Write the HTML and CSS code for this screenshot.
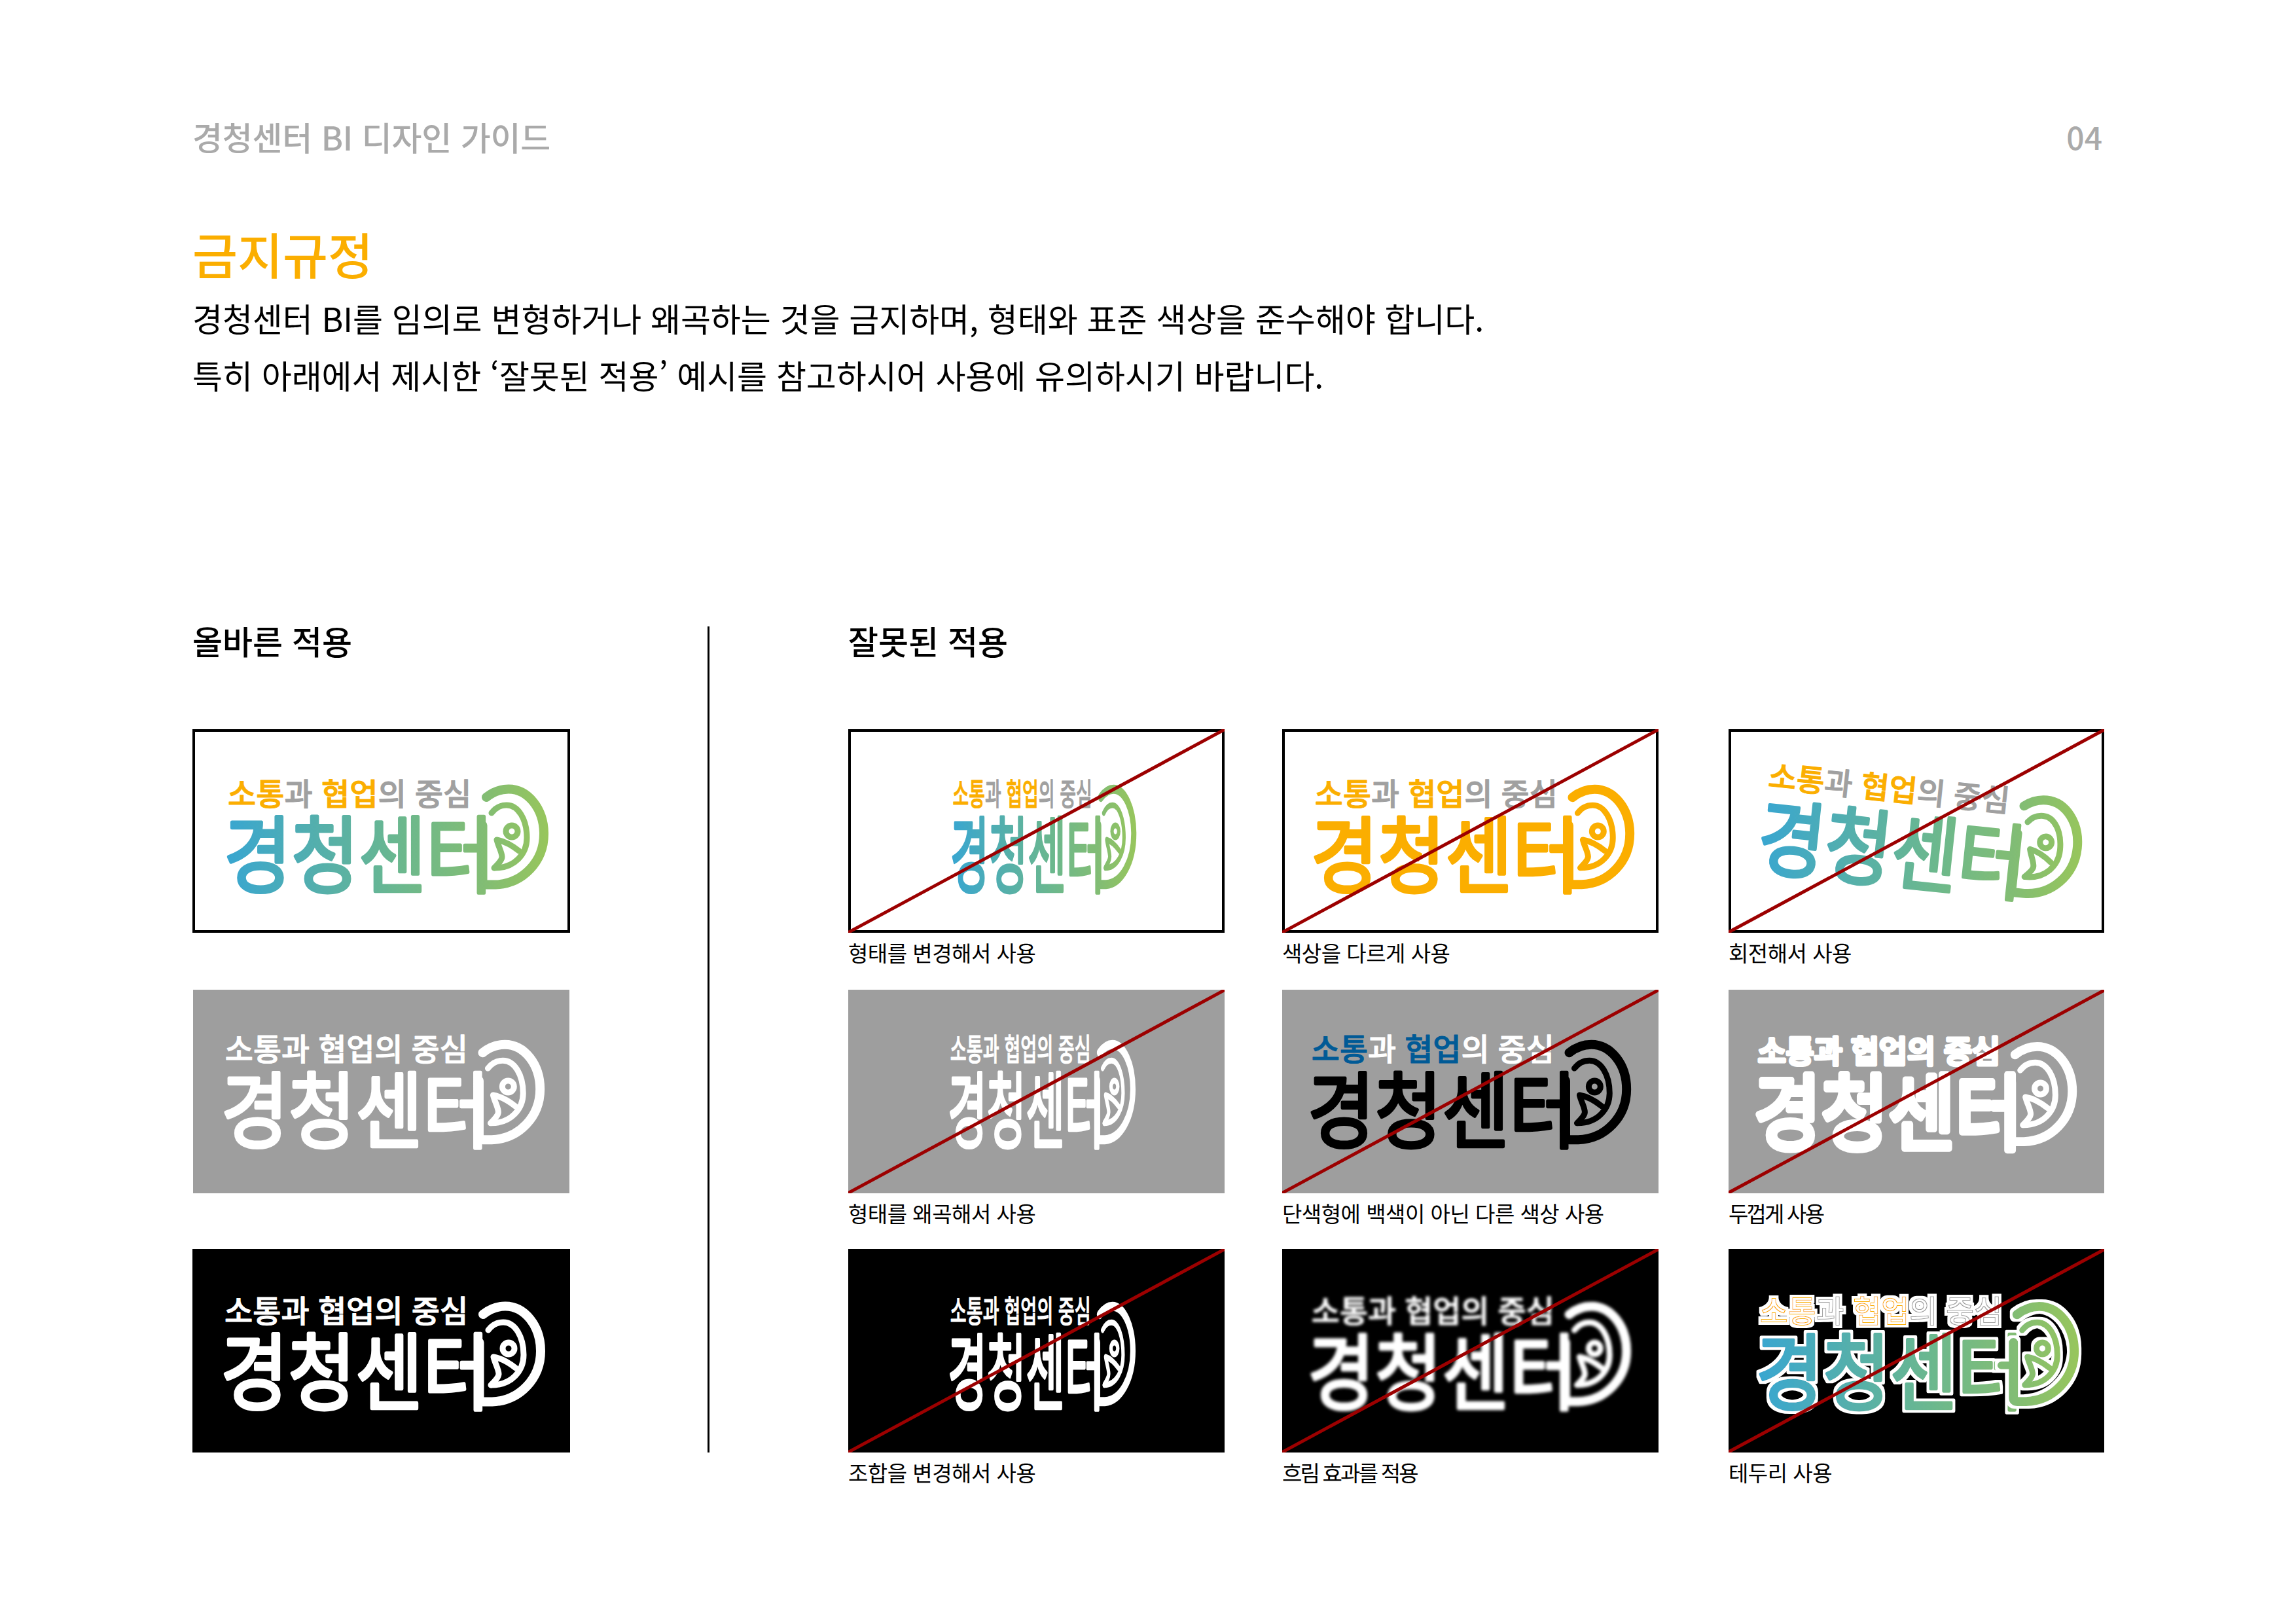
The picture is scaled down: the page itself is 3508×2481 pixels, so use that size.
FILE: index.html
```html
<!DOCTYPE html>
<html lang="ko">
<head>
<meta charset="utf-8">
<title>경청센터 BI 디자인 가이드</title>
<link rel="stylesheet" href="styles.css">
</head>
<body>
<svg class="defs" width="0" height="0" aria-hidden="true">
  <defs>
    <linearGradient id="wordGrad" gradientUnits="userSpaceOnUse" x1="50" y1="0" x2="440" y2="0">
      <stop offset="0" stop-color="#38a6d1"/>
      <stop offset=".36" stop-color="#54afac"/>
      <stop offset=".7" stop-color="#6cb88d"/>
      <stop offset="1" stop-color="#82bd74"/>
    </linearGradient>
    <linearGradient id="markGrad" gradientUnits="userSpaceOnUse" x1="30" y1="0" x2="140" y2="0">
      <stop offset="0" stop-color="#80bc76"/>
      <stop offset="1" stop-color="#98c65b"/>
    </linearGradient>
    <filter id="outline" x="-10%" y="-10%" width="120%" height="120%">
      <feMorphology in="SourceAlpha" operator="dilate" radius="4" result="fat"/>
      <feFlood flood-color="#fff"/>
      <feComposite in2="fat" operator="in" result="white"/>
      <feMerge><feMergeNode in="white"/><feMergeNode in="SourceGraphic"/></feMerge>
    </filter>
    <filter id="outlineThin" x="-10%" y="-20%" width="120%" height="140%">
      <feMorphology in="SourceAlpha" operator="dilate" radius="4" result="fat"/>
      <feFlood flood-color="#fff"/>
      <feComposite in2="fat" operator="in" result="white"/>
      <feMorphology in="SourceAlpha" operator="erode" radius="1" result="thin"/>
      <feFlood flood-color="#fff"/>
      <feComposite in2="thin" operator="in" result="core"/>
      <feMerge><feMergeNode in="white"/><feMergeNode in="SourceGraphic"/><feMergeNode in="core"/></feMerge>
    </filter>
    <filter id="blurry" x="-5%" y="-5%" width="110%" height="110%">
      <feGaussianBlur stdDeviation="2.4"/>
    </filter>
    <symbol id="mark" viewBox="0 0 160 180" width="160" height="180" overflow="visible">
      <g class="mark-lines">
        <path class="ms-outer" d="M42 38 C52 30 64 25.500 76 25.500 C106 25.500 130 56 130 94 C130 136 98 170 56 171.500 L42.500 171.500 C38.500 171.500 36.500 169.500 36.500 165.500 L36.500 81"/>
        <path class="ms-bar" d="M18 116 L36 116"/>
        <path class="ms-inner" d="M50 62 C56 54 64 50 73 50 C91 50 104 72 104 100 C104 124 86 146 55 146"/>
        <path class="ms-fish" d="M92 120 C82 112 70 105 58 103 C60 112 66 122 66 129 C66 134 60 140 54 146"/>
        <circle class="ms-eye" cx="81" cy="90" r="9"/>
      </g>
    </symbol>
  </defs>
</svg>

<main class="page">
  <header class="top">
    <span class="doc-title">경청센터 BI 디자인 가이드</span>
    <span class="page-no">04</span>
  </header>

  <section class="intro">
    <h1 class="rule-title">금지규정</h1>
    <p class="rule-copy">경청센터 BI를 임의로 변형하거나 왜곡하는 것을 금지하며, 형태와 표준 색상을 준수해야 합니다.</p>
    <p class="rule-copy">특히 아래에서 제시한 ‘잘못된 적용’ 예시를 참고하시어 사용에 유의하시기 바랍니다.</p>
  </section>

  <section class="board">
    <div class="board-divider"></div>

    <h2 class="col-head col-head--good">올바른 적용</h2>
    <h2 class="col-head col-head--bad">잘못된 적용</h2>

    <!-- row 1 -->
    <figure class="cell col-good">
      <div class="panel panel--framed">
        <svg class="art logo-color" viewBox="0 0 577 311">
          <g>
            <text class="tag" x="54" y="116"><tspan class="hi">소통</tspan><tspan class="lo">과 </tspan><tspan class="hi">협업</tspan><tspan class="lo">의 중심</tspan></text>
            <text class="word" x="48" y="240" textLength="412" lengthAdjust="spacingAndGlyphs">경청센터</text>
            <use href="#mark" x="407" y="66"/>
          </g>
        </svg>
      </div>
    </figure>
    <figure class="cell col-a">
      <div class="panel panel--framed">
        <svg class="art logo-color" viewBox="0 0 577 311">
          <g transform="translate(129 0) scale(.575 1)">
            <text class="tag" x="54" y="116"><tspan class="hi">소통</tspan><tspan class="lo">과 </tspan><tspan class="hi">협업</tspan><tspan class="lo">의 중심</tspan></text>
            <text class="word" x="48" y="240" textLength="412" lengthAdjust="spacingAndGlyphs">경청센터</text>
            <use href="#mark" x="407" y="66"/>
          </g>
          <line class="slash" x1="0" y1="311" x2="577" y2="0"/>
        </svg>
      </div>
      <figcaption class="caption">형태를 변경해서 사용</figcaption>
    </figure>
    <figure class="cell col-b">
      <div class="panel panel--framed">
        <svg class="art logo-orange" viewBox="0 0 577 311">
          <g transform="translate(-4 0)">
            <text class="tag" x="54" y="116"><tspan class="hi">소통</tspan><tspan class="lo">과 </tspan><tspan class="hi">협업</tspan><tspan class="lo">의 중심</tspan></text>
            <text class="word" x="48" y="240" textLength="412" lengthAdjust="spacingAndGlyphs">경청센터</text>
            <use href="#mark" x="407" y="66"/>
          </g>
          <line class="slash" x1="0" y1="311" x2="577" y2="0"/>
        </svg>
      </div>
      <figcaption class="caption">색상을 다르게 사용</figcaption>
    </figure>
    <figure class="cell col-c">
      <div class="panel panel--framed">
        <svg class="art logo-color" viewBox="0 0 577 311">
          <g transform="rotate(6 288 155) translate(0 -4)">
            <text class="tag" x="54" y="116"><tspan class="hi">소통</tspan><tspan class="lo">과 </tspan><tspan class="hi">협업</tspan><tspan class="lo">의 중심</tspan></text>
            <text class="word" x="48" y="240" textLength="412" lengthAdjust="spacingAndGlyphs">경청센터</text>
            <use href="#mark" x="407" y="66"/>
          </g>
          <line class="slash" x1="0" y1="311" x2="577" y2="0"/>
        </svg>
      </div>
      <figcaption class="caption">회전해서 사용</figcaption>
    </figure>

    <!-- row 2 -->
    <figure class="cell col-good">
      <div class="panel panel--grey panel--inset">
        <svg class="art logo-white" viewBox="0 0 577 311">
          <g transform="translate(-5 -8)">
            <text class="tag" x="54" y="116">소통과 협업의 중심</text>
            <text class="word" x="48" y="240" textLength="412" lengthAdjust="spacingAndGlyphs">경청센터</text>
            <use href="#mark" x="407" y="66"/>
          </g>
        </svg>
      </div>
    </figure>
    <figure class="cell col-a">
      <div class="panel panel--grey">
        <svg class="art logo-white" viewBox="0 0 577 311">
          <g transform="translate(125 -8) scale(.58 1)">
            <text class="tag" x="54" y="116" textLength="372" lengthAdjust="spacingAndGlyphs">소통과 협업의 중심</text>
            <text class="word" x="48" y="240" textLength="412" lengthAdjust="spacingAndGlyphs">경청센터</text>
            <use href="#mark" x="407" y="66"/>
          </g>
          <line class="slash" x1="0" y1="311" x2="577" y2="0"/>
        </svg>
      </div>
      <figcaption class="caption">형태를 왜곡해서 사용</figcaption>
    </figure>
    <figure class="cell col-b">
      <div class="panel panel--grey">
        <svg class="art logo-black" viewBox="0 0 577 311">
          <g transform="translate(-9 -8)">
            <text class="tag" x="54" y="116"><tspan class="hi">소통</tspan><tspan class="lo">과 </tspan><tspan class="hi">협업</tspan><tspan class="lo">의 중심</tspan></text>
            <text class="word" x="48" y="240" textLength="412" lengthAdjust="spacingAndGlyphs">경청센터</text>
            <use href="#mark" x="407" y="66"/>
          </g>
          <line class="slash" x1="0" y1="311" x2="577" y2="0"/>
        </svg>
      </div>
      <figcaption class="caption">단색형에 백색이 아닌 다른 색상 사용</figcaption>
    </figure>
    <figure class="cell col-c">
      <div class="panel panel--grey">
        <svg class="art logo-white logo-fat" viewBox="0 0 577 311">
          <g transform="translate(-9 -5)">
            <text class="tag" x="54" y="116">소통과 협업의 중심</text>
            <text class="word" x="48" y="240" textLength="412" lengthAdjust="spacingAndGlyphs">경청센터</text>
            <use href="#mark" x="407" y="66"/>
          </g>
          <line class="slash" x1="0" y1="311" x2="577" y2="0"/>
        </svg>
      </div>
      <figcaption class="caption caption--tight">두껍게 사용</figcaption>
    </figure>

    <!-- row 3 -->
    <figure class="cell col-good">
      <div class="panel panel--black">
        <svg class="art logo-white" viewBox="0 0 577 311">
          <g transform="translate(-5 -4)">
            <text class="tag" x="54" y="116">소통과 협업의 중심</text>
            <text class="word" x="48" y="240" textLength="412" lengthAdjust="spacingAndGlyphs">경청센터</text>
            <use href="#mark" x="407" y="66"/>
          </g>
        </svg>
      </div>
    </figure>
    <figure class="cell col-a">
      <div class="panel panel--black">
        <svg class="art logo-white" viewBox="0 0 577 311">
          <g transform="translate(125 -4) scale(.58 1)">
            <text class="tag" x="54" y="116" textLength="372" lengthAdjust="spacingAndGlyphs">소통과 협업의 중심</text>
            <text class="word" x="48" y="240" textLength="412" lengthAdjust="spacingAndGlyphs">경청센터</text>
            <use href="#mark" x="407" y="66"/>
          </g>
          <line class="slash" x1="0" y1="311" x2="577" y2="0"/>
        </svg>
      </div>
      <figcaption class="caption">조합을 변경해서 사용</figcaption>
    </figure>
    <figure class="cell col-b">
      <div class="panel panel--black">
        <svg class="art logo-white" viewBox="0 0 577 311">
          <g transform="translate(-9 -4)" filter="url(#blurry)">
            <text class="tag" x="54" y="116">소통과 협업의 중심</text>
            <text class="word" x="48" y="240" textLength="412" lengthAdjust="spacingAndGlyphs">경청센터</text>
            <use href="#mark" x="407" y="66"/>
          </g>
          <line class="slash" x1="0" y1="311" x2="577" y2="0"/>
        </svg>
      </div>
      <figcaption class="caption caption--tight">흐림 효과를 적용</figcaption>
    </figure>
    <figure class="cell col-c">
      <div class="panel panel--black">
        <svg class="art logo-color logo-ringed" viewBox="0 0 577 311">
          <g transform="translate(-6 -4)">
            <text class="tag" x="54" y="116" filter="url(#outlineThin)"><tspan class="hi">소통</tspan><tspan class="lo">과 </tspan><tspan class="hi">협업</tspan><tspan class="lo">의 중심</tspan></text>
            <text class="word" x="48" y="240" textLength="412" lengthAdjust="spacingAndGlyphs" filter="url(#outline)">경청센터</text>
            <g filter="url(#outline)"><use href="#mark" x="407" y="66"/></g>
          </g>
          <line class="slash" x1="0" y1="311" x2="577" y2="0"/>
        </svg>
      </div>
      <figcaption class="caption">테두리 사용</figcaption>
    </figure>
  </section>
</main>
</body>
</html>
```
FILE: styles.css
```css
* { box-sizing: border-box; }

html, body {
  margin: 0;
  padding: 0;
  background: #fff;
}

body {
  font-family: "Noto Sans CJK KR", "Noto Sans", sans-serif;
  color: #000;
}

.defs { position: absolute; }

.page {
  width: 3508px;
  height: 2481px;
  padding: 170px 296px 0 294px;
  overflow: hidden;
}

/* header */
.top {
  display: flex;
  justify-content: space-between;
  align-items: center;
  height: 76px;
  color: #aaaaaa;
  font-size: 50px;
  font-weight: 500;
  letter-spacing: -0.005em;
}
.page-no { font-size: 48px; letter-spacing: 0; }

/* intro */
.intro { margin-top: 95px; }
.rule-title {
  margin: 0;
  height: 101px;
  font-size: 75px;
  line-height: 92px;
  font-weight: 500;
  color: #fbae00;
}
.rule-copy {
  margin: 0;
  height: 87px;
  font-size: 50px;
  line-height: 87px;
  letter-spacing: -0.08px;
  font-weight: 400;
}

/* board */
.board {
  margin-top: 341px;
  display: grid;
  grid-template-columns: 577px 210px 3px 212px 575px 88px 575px 107px 574px;
  grid-template-rows: 157px 398px 396px 360px;
}
.board-divider {
  grid-column: 3;
  grid-row: 1 / 5;
  width: 3px;
  height: 1262px;
  background: #000;
}
.col-head {
  margin: 0;
  font-size: 50px;
  line-height: 42px;
  font-weight: 500;
}
.col-head--good { grid-column: 1; grid-row: 1; }
.col-head--bad { grid-column: 5 / 8; grid-row: 1; }

.cell { margin: 0; }
.col-good { grid-column: 1; }
.col-a { grid-column: 5; }
.col-b { grid-column: 7; }
.col-c { grid-column: 9; }

.panel { height: 311px; background: #fff; }
.panel--framed { box-shadow: inset 0 0 0 4px #000; }
.panel--grey { background: #9e9e9e; }
.panel--black { background: #000; }
.panel--inset { margin: 0 1px; }

.art {
  display: block;
  width: 100%;
  height: 100%;
}

.caption {
  margin-top: 8px;
  font-size: 33px;
  line-height: 44px;
  letter-spacing: -0.015em;
}
.caption--tight { letter-spacing: -0.085em; }

.slash {
  stroke: #9c0000;
  stroke-width: 5;
}

/* logo */
.tag {
  font-size: 47px;
  font-weight: 500;
  stroke-linejoin: round;
  stroke-width: 1;
}
.word {
  font-size: 128px;
  font-weight: 400;
  stroke-linejoin: round;
  stroke-width: 5;
}
.mark-lines {
  fill: none;
  stroke: var(--mark, #000);
  stroke-linecap: round;
  stroke-linejoin: round;
}
.ms-outer { stroke-width: 14; }
.ms-bar { stroke-width: 12; }
.ms-inner, .ms-fish, .ms-eye { stroke-width: 9; }

.logo-color { --mark: url(#markGrad); }
.logo-color .hi { fill: #fbae00; stroke: #fbae00; }
.logo-color .lo { fill: #a0a0a0; stroke: #a0a0a0; }
.logo-color .word { fill: url(#wordGrad); stroke: url(#wordGrad); }

.logo-ringed .tag { font-weight: 700; stroke-width: 0; }

.logo-orange { --mark: #fbae00; }
.logo-orange .hi { fill: #fbae00; stroke: #fbae00; }
.logo-orange .lo { fill: #a0a0a0; stroke: #a0a0a0; }
.logo-orange .word { fill: #fbae00; stroke: #fbae00; }

.logo-white { --mark: #fff; }
.logo-white .tag, .logo-white .word { fill: #fff; stroke: #fff; }

.logo-black { --mark: #000; }
.logo-black .hi { fill: #005a96; stroke: #005a96; }
.logo-black .lo { fill: #fff; stroke: #fff; }
.logo-black .word { fill: #000; stroke: #000; }

.logo-fat .tag { stroke-width: 5; }
.logo-fat .word { stroke-width: 10; }
.logo-fat .ms-outer { stroke-width: 18; }
.logo-fat .ms-bar { stroke-width: 16; }
.logo-fat .ms-inner, .logo-fat .ms-fish, .logo-fat .ms-eye { stroke-width: 13; }
```
